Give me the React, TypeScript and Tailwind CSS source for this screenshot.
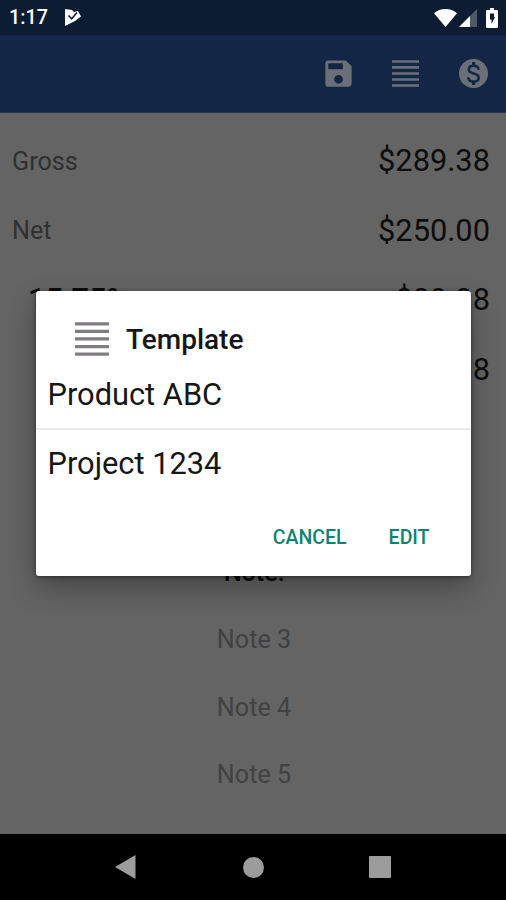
import { MdSave } from 'react-icons/md';

const amounts = [
  { label: 'Gross', value: '$289.38' },
  { label: 'Net', value: '$250.00' },
  { label: '15.75%', value: '$39.38', rate: true },
  { label: '', value: '$289.38' },
];

function LinesIcon({ className }: { className: string }) {
  return (
    <svg className={className} viewBox="0 0 34 34" fill="currentColor">
      <path d="M0 .2h34v3.300H0zM0 7.700h34V11H0zM0 15.300h34v3.300H0zM0 22.900h34v3.300H0zM0 30.400h34v3.300H0z" />
    </svg>
  );
}

function DollarIcon() {
  return (
    <svg className="size-[29px]" viewBox="0 0 29 29" fill="none">
      <circle cx="14.500" cy="14.500" r="14.500" fill="currentColor" />
      <path
        d="M19.600 10.800C19.500 8.300 17.500 6.700 14.600 6.700c-2.800 0-4.800 1.500-4.800 3.800 0 2.400 2 3.300 4.900 4 3.100.8 5 1.800 5 4.200 0 2.400-2 3.800-5 3.800-3.200 0-5.300-1.600-5.400-4.300"
        stroke="#132645"
        strokeWidth="2.500"
      />
      <path d="M14.600 3v4M14.600 22v4" stroke="#132645" strokeWidth="3.200" />
    </svg>
  );
}

function StatusBar() {
  return (
    <div className="h-[35px] flex items-center justify-between bg-[#0d1b33] pl-[9px] pr-[8px] text-white">
      <div className="flex items-center gap-[16px]">
        <span className="pt-px text-[19.8px] leading-[34px] font-medium">1:17</span>
        <svg className="w-[18px] h-[19px]" viewBox="0 0 18 19">
          <path d="M1 1l7 1 2 2 4-1 3 5.500-6 4.500L1 18z" fill="currentColor" />
          <path d="M4.500 7.500l3.200 3.300L13 4.500" fill="none" stroke="#0d1b33" strokeWidth="1.500" />
        </svg>
      </div>
      <div className="flex items-center">
        <svg className="w-[23px] h-[18px]" viewBox="0 0 23 18">
          <path d="M11.5 18L0 4.2C3 1.5 7 0 11.5 0S20 1.5 23 4.2z" fill="currentColor" />
        </svg>
        <svg className="ml-[2px] w-[18px] h-[18px]" viewBox="0 0 18 18">
          <path d="M18 0v18H0z" fill="#4d5869" />
          <path d="M11 7v11H0z" fill="currentColor" />
        </svg>
        <svg className="ml-[9px] w-[12px] h-[20px]" viewBox="0 0 12 20">
          <path d="M4 0h4v2h3a1 1 0 0 1 1 1v16a1 1 0 0 1-1 1H1a1 1 0 0 1-1-1V3a1 1 0 0 1 1-1h3z" fill="currentColor" />
          <path d="M4 5.500h4V9h1l-3.500 7v-4.500H4z" fill="#0d1b33" />
        </svg>
      </div>
    </div>
  );
}

function TemplateDialog() {
  return (
    <div className="absolute left-[36px] top-[291px] w-[435px] h-[285px] flex flex-col rounded-[3px] bg-white text-[#161616] shadow-[0_12px_28px_rgba(0,0,0,0.3),0_1px_4px_rgba(0,0,0,0.45)]">
      <div className="h-[69px] flex items-center pt-[27px] pl-[39px]">
        <LinesIcon className="size-[34px] shrink-0 mb-px text-[#807d80]" />
        <h2 className="ml-[17px] pt-[2px] text-[28px] leading-[32px] font-medium">Template</h2>
      </div>
      <button className="h-[70px] border-b-2 border-[#ececec] px-[11.500px] pt-[2px] text-left text-[30.800px]">
        Product ABC
      </button>
      <button className="h-[68px] px-[11.500px] text-left text-[30.800px]">Project 1234</button>
      <div className="flex justify-end gap-[42px] pt-[28px] pr-[41.500px] text-[19.5px] leading-[24px] font-medium text-[#0b8573]">
        <button>CANCEL</button>
        <button>EDIT</button>
      </div>
    </div>
  );
}

function NavBar() {
  return (
    <div className="h-[66px] shrink-0 flex items-center justify-between bg-black px-[115px] text-[#9c9c9c]">
      <svg className="w-[21px] h-[24px]" viewBox="0 0 21 24">
        <path d="M20.500 0v24L0 12z" fill="currentColor" />
      </svg>
      <div className="ml-[2px] size-[21px] rounded-full bg-[#9c9c9c]" />
      <div className="size-[22px] rounded-[1px] bg-[#9c9c9c]" />
    </div>
  );
}

export default function App() {
  return (
    <div className="relative w-[506px] h-[900px] flex flex-col overflow-hidden bg-[#646464] font-['Roboto',sans-serif]">
      <StatusBar />

      {/* toolbar */}
      <div className="h-[78px] shrink-0 flex items-center justify-end bg-[#132645] pr-[18.500px] text-[#6b7078] border-b border-[#2d3745]">
        <MdSave className="size-[35px]" />
        <LinesIcon className="ml-[36.500px] size-[27px]" />
        <div className="ml-[39.500px]">
          <DollarIcon />
        </div>
      </div>

      {/* amounts */}
      <div className="pt-[13.500px] pl-[12px] pr-[16px]">
        {amounts.map((row, i) => (
          <div key={i} className="h-[69.5px] flex items-center justify-between text-[30.800px] text-[#0d0d0d]">
            {row.rate ? (
              <span className="pl-[16px] font-medium">{row.label}</span>
            ) : (
              <span className="pt-px text-[25.200px] text-[#303030]">{row.label}</span>
            )}
            <span>{row.value}</span>
          </div>
        ))}
      </div>

      {/* notes */}
      <div className="mt-auto mb-[25px] pl-[2px] flex flex-col items-center text-[25.200px] text-[#414141]">
        <div className="h-[67.500px] flex items-center font-medium text-black">Note:</div>
        <div className="h-[67.500px] flex items-center">Note 3</div>
        <div className="h-[67.500px] flex items-center">Note 4</div>
        <div className="h-[67.500px] flex items-center">Note 5</div>
      </div>

      <NavBar />
      <TemplateDialog />
    </div>
  );
}
